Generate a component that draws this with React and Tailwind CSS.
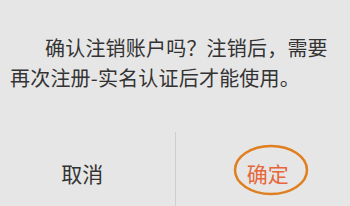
import React from 'react';

function App() {
  return (
    <div
      className="w-[350px] h-[206px] overflow-hidden bg-[#e6e6e6] text-[#333333]"
      style={{ fontFamily: '"Noto Sans CJK SC", "Noto Sans", sans-serif' }}
    >
      {/* message */}
      <p className="pt-[33px] px-[10px] text-[20px] leading-[30px] indent-[35px] tracking-[0.2px]">
        确认注销账户吗？注销后，需要再次注册-实名认证后才能使用。
      </p>

      {/* buttons */}
      <div className="mt-[39px] flex h-[84px]">
        <button className="flex-1 flex items-center justify-center pr-[10px] text-[21px] text-[#333333]">
          取消
        </button>
        <div className="w-px bg-[#cfcfcf]" />
        <button className="relative flex-1 flex items-center justify-center pl-[10px] text-[21px] text-[#e5673a]">
          确定
          <svg
            className="absolute left-[56px] top-[12px]"
            width="78"
            height="54"
            viewBox="0 0 78 54"
          >
            <ellipse cx="39" cy="26" rx="36" ry="24" fill="none" stroke="#e07f1f" strokeWidth="2.5" />
          </svg>
        </button>
      </div>
    </div>
  );
}

export default App;
